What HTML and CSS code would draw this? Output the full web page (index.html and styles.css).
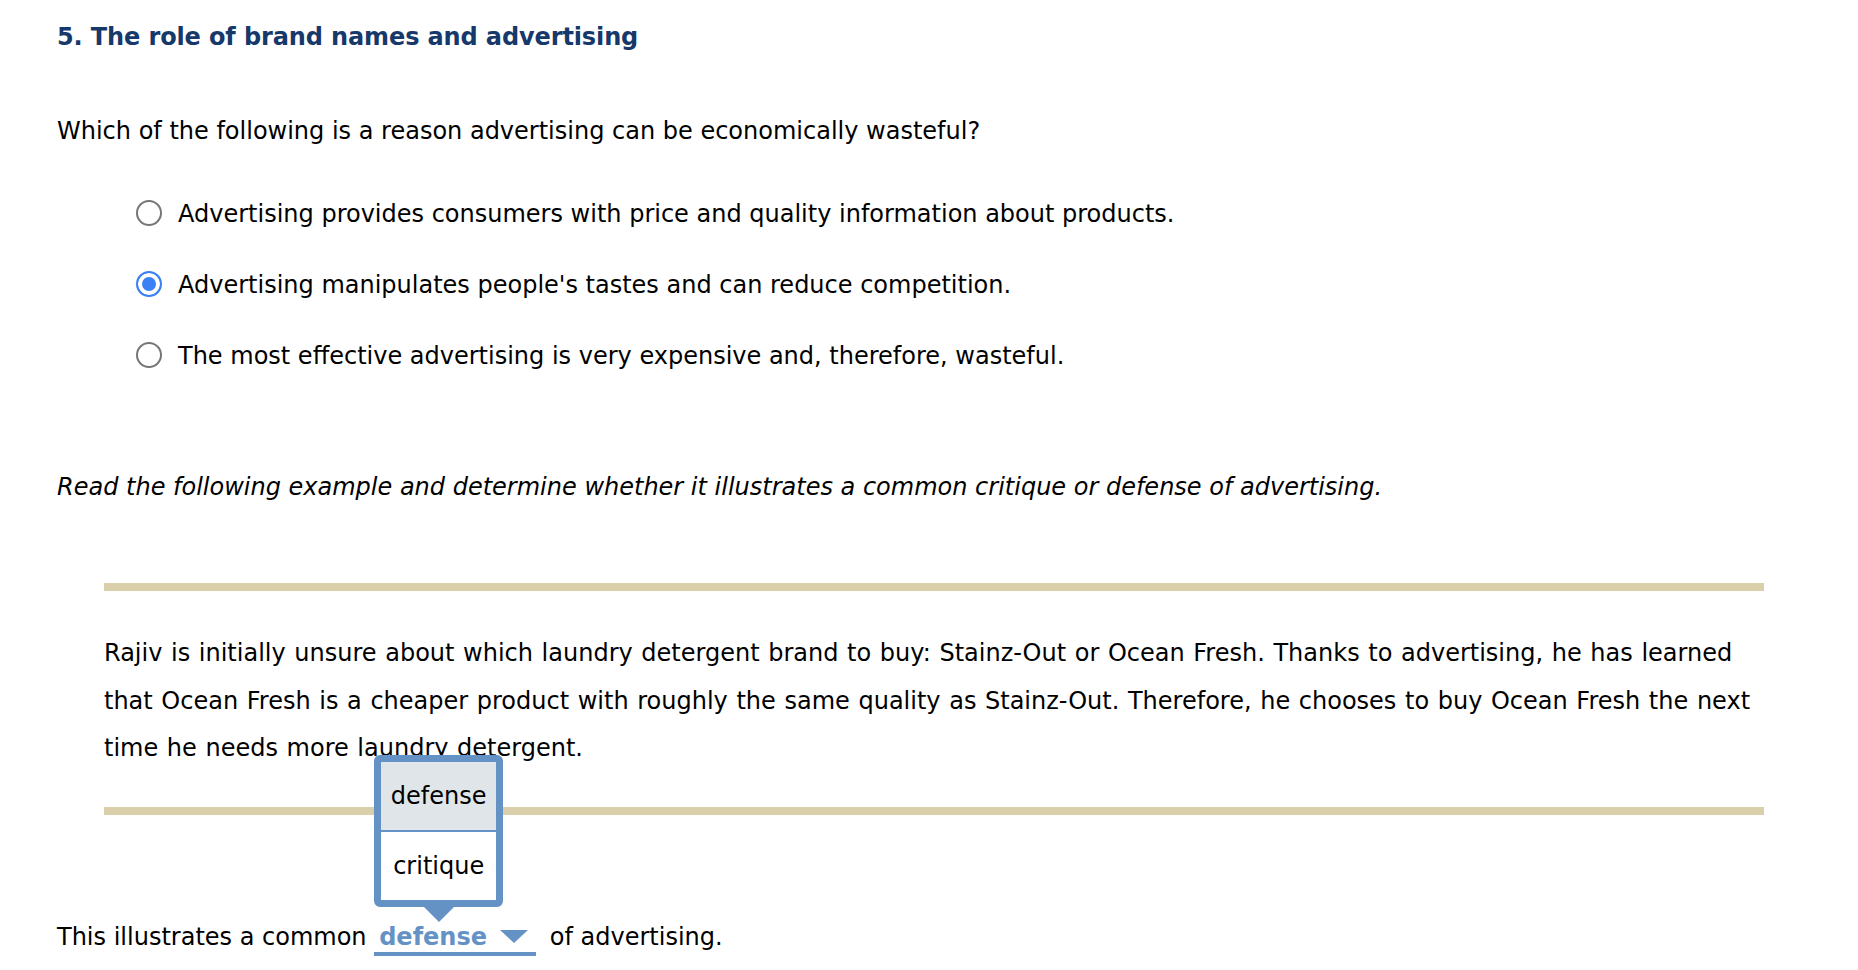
FILE: index.html
```html
<!DOCTYPE html>
<html lang="en">
<head>
<meta charset="utf-8">
<title>The role of brand names and advertising</title>
<link rel="stylesheet" href="styles.css">
</head>
<body>
<main class="page">
  <h1 class="title">5. The role of brand names and advertising</h1>

  <p class="question">Which of the following is a reason advertising can be economically wasteful?</p>

  <ul class="choices">
    <li class="choice"><input class="radio" type="radio" name="q1"><span>Advertising provides consumers with price and quality information about products.</span></li>
    <li class="choice"><input class="radio" type="radio" name="q1" checked><span>Advertising manipulates people's tastes and can reduce competition.</span></li>
    <li class="choice"><input class="radio" type="radio" name="q1"><span>The most effective advertising is very expensive and, therefore, wasteful.</span></li>
  </ul>

  <p class="instruction">Read the following example and determine whether it illustrates a common critique or defense of advertising.</p>

  <section class="passage">
    <p class="passage-text">Rajiv is initially unsure about which laundry detergent brand to buy: Stainz-Out or Ocean Fresh. Thanks to advertising, he has learned that Ocean Fresh is a cheaper product with roughly the same quality as Stainz-Out. Therefore, he chooses to buy Ocean Fresh the next time he needs more laundry detergent.</p>
  </section>

  <p class="answer">This illustrates a common <span class="select"><span class="select-value">defense</span><svg class="select-arrow" width="28" height="13" viewBox="0 0 28 13"><polygon points="0,0 28,0 14,13" fill="#6592c5"/></svg><span class="menu"><span class="menu-item active">defense</span><span class="menu-item">critique</span></span></span> of advertising.</p>
</main>
</body>
</html>
```

FILE: styles.css
```css
html, body {
  margin: 0;
  padding: 0;
  background: #ffffff;
}

body {
  font-family: "DejaVu Sans", Verdana, sans-serif;
  font-size: 24px;
  color: #000000;
}

.page {
  padding: 22px 0 0 57px;
}

.title {
  margin: 0;
  font-size: 24px;
  line-height: 30px;
  font-weight: bold;
  letter-spacing: -0.12px;
  color: #17386a;
}

.question {
  margin: 64px 0 0 0;
  line-height: 30px;
}

.choices {
  list-style: none;
  margin: 53px 0 0 0;
  padding: 0 0 0 79px;
}

.choice {
  display: flex;
  align-items: flex-start;
  gap: 16px;
  line-height: 30px;
}

.choice + .choice {
  margin-top: 41px;
}

.radio {
  appearance: none;
  -webkit-appearance: none;
  box-sizing: border-box;
  width: 26px;
  height: 26px;
  margin: 1px 0 0 0;
  border: 2px solid #767676;
  border-radius: 50%;
  background: #ffffff;
  flex: none;
}

.radio:checked {
  border-color: #3b80f5;
  background: #3b80f5;
  box-shadow: inset 0 0 0 4px #ffffff;
}

.instruction {
  margin: 101px 0 0 0;
  line-height: 30px;
  font-style: italic;
}

.passage {
  margin: 81px 0 0 47px;
  width: 1660px;
  border-top: 8px solid #d9cfaa;
  border-bottom: 8px solid #d9cfaa;
  padding: 39px 0 34px 0;
}

.passage-text {
  margin: 0;
  line-height: 47.5px;
  word-spacing: 1px;
}

.answer {
  margin: 107px 0 0 0;
  line-height: 30px;
}

.select {
  position: relative;
  display: inline-block;
  margin: 0 6px 0 0;
  padding: 0 8px 0 5px;
  border-bottom: 4px solid #6592c5;
  color: #6592c5;
  font-weight: bold;
  vertical-align: baseline;
}

.select-value {
  display: inline-block;
  width: 121px;
}

.select-arrow {
  vertical-align: 2px;
}

.menu {
  position: absolute;
  left: 0;
  bottom: 45px;
  box-sizing: border-box;
  width: 129px;
  display: flex;
  flex-direction: column;
  border: 7px solid #6592c5;
  border-radius: 6px;
  background: #ffffff;
  color: #000000;
  font-weight: normal;
  z-index: 2;
}

.menu::after {
  content: "";
  position: absolute;
  left: 50%;
  top: 100%;
  margin-left: -15px;
  margin-top: 7px;
  border-left: 15px solid transparent;
  border-right: 15px solid transparent;
  border-top: 15px solid #6592c5;
}

.menu-item {
  display: block;
  height: 68px;
  line-height: 68px;
  text-align: center;
}

.menu-item + .menu-item {
  border-top: 2px solid #6592c5;
}

.menu-item.active {
  background: #dfe5e8;
}
```
